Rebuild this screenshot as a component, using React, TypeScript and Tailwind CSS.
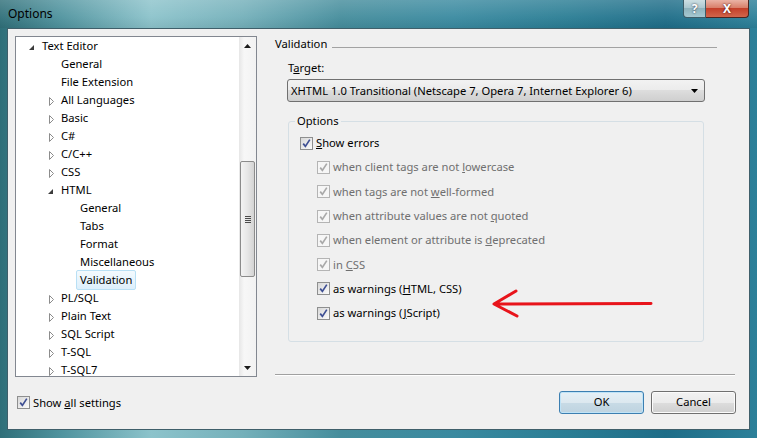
import React from 'react'
import clsx from 'clsx'

type Node = { label: string; level: number; toggle?: 'open' | 'closed'; selected?: boolean }

const tree: Node[] = [
  { label: 'Text Editor', level: 0, toggle: 'open' },
  { label: 'General', level: 1 },
  { label: 'File Extension', level: 1 },
  { label: 'All Languages', level: 1, toggle: 'closed' },
  { label: 'Basic', level: 1, toggle: 'closed' },
  { label: 'C#', level: 1, toggle: 'closed' },
  { label: 'C/C++', level: 1, toggle: 'closed' },
  { label: 'CSS', level: 1, toggle: 'closed' },
  { label: 'HTML', level: 1, toggle: 'open' },
  { label: 'General', level: 2 },
  { label: 'Tabs', level: 2 },
  { label: 'Format', level: 2 },
  { label: 'Miscellaneous', level: 2 },
  { label: 'Validation', level: 2, selected: true },
  { label: 'PL/SQL', level: 1, toggle: 'closed' },
  { label: 'Plain Text', level: 1, toggle: 'closed' },
  { label: 'SQL Script', level: 1, toggle: 'closed' },
  { label: 'T-SQL', level: 1, toggle: 'closed' },
  { label: 'T-SQL7', level: 1, toggle: 'closed' },
]

const indent = ['pl-[7px]', 'pl-[26px]', 'pl-[45px]']

function Toggle({ kind }: { kind?: 'open' | 'closed' }) {
  return (
    <svg width="19" height="18" viewBox="0 0 19 18" className="shrink-0">
      {kind === 'open' && <polygon points="11,8 11,13 6,13" fill="#3c3c3c" />}
      {kind === 'closed' && <polygon points="7.5,6.5 7.5,14.5 11.5,10.5" fill="#fff" stroke="#8c8c8c" />}
    </svg>
  )
}

function Check({ disabled }: { disabled?: boolean }) {
  return (
    <span
      className={clsx(
        'flex h-[13px] w-[13px] shrink-0 items-center justify-center border',
        disabled
          ? 'border-[#b4b4b4] bg-[#f6f6f6]'
          : 'border-[#8e8f8f] bg-[linear-gradient(135deg,#d8d8d8,#fbfbfb)]'
      )}
    >
      <svg width="11" height="11" viewBox="0 0 11 11">
        <path
          d="M2.2 5.6 L4.4 8.4 L8.8 1.6"
          fill="none"
          stroke={disabled ? '#a9a9a9' : '#3e4f93'}
          strokeWidth="1.7"
        />
      </svg>
    </span>
  )
}

function Option({ children, disabled, sub }: { children: React.ReactNode; disabled?: boolean; sub?: boolean }) {
  return (
    <div className={clsx('flex h-[24.3px] items-center gap-[3px]', sub ? 'pl-[28px]' : 'pl-[11px]')}>
      <Check disabled={disabled} />
      <span className={clsx('leading-[16px]', disabled && 'text-[#6f6f6f]')}>{children}</span>
    </div>
  )
}

function Scrollbar() {
  return (
    <div className="flex w-[17px] shrink-0 flex-col bg-[linear-gradient(90deg,#e6e6e6,#f7f7f7_30%,#f2f2f2)]">
      <div className="flex h-[17px] items-center justify-center">
        <svg width="7" height="4" viewBox="0 0 7 4">
          <polygon points="0,4 7,4 3.5,0" fill="#1a1a1a" />
        </svg>
      </div>
      <div className="flex flex-1 flex-col items-center pt-[107px]">
        <div className="flex h-[116px] w-[15px] items-center justify-center rounded-[2px] border border-[#8b8b8b] bg-[linear-gradient(90deg,#f3f3f3,#e6e6e6_50%,#d3d3d3)]">
          <div className="flex flex-col gap-[1px]">
            <div className="h-px w-[6px] bg-[#4a4a4a]" />
            <div className="h-px w-[6px] bg-[#4a4a4a]" />
            <div className="h-px w-[6px] bg-[#4a4a4a]" />
            <div className="h-px w-[6px] bg-[#4a4a4a]" />
          </div>
        </div>
      </div>
      <div className="flex h-[17px] items-center justify-center">
        <svg width="7" height="4" viewBox="0 0 7 4">
          <polygon points="0,0 7,0 3.5,4" fill="#1a1a1a" />
        </svg>
      </div>
    </div>
  )
}

function Tree() {
  return (
    <div className="flex h-[341px] w-[242px] shrink-0 overflow-hidden border border-[#828790] bg-white">
      <div className="flex-1 overflow-hidden">
        {tree.map((n, i) => (
          <div key={i} className={clsx('flex h-[18px] items-center', indent[n.level])}>
            <Toggle kind={n.toggle} />
            <span
              className={clsx(
                'leading-[16px]',
                n.selected &&
                  '-ml-[4px] rounded-[2px] border border-[#b9e0f5] bg-[linear-gradient(#f4fafe,#ddeffb)] px-[3px] py-px'
              )}
            >
              {n.label}
            </span>
          </div>
        ))}
      </div>
      <Scrollbar />
    </div>
  )
}

export default function App() {
  return (
    <div className="relative flex h-[438px] w-[757px] flex-col overflow-hidden bg-[linear-gradient(90deg,#2f6f79_0%,#4f939e_8%,#8cc3cb_20%,#74b0ba_32%,#458d9c_45%,#3a8aa0_60%,#2a7d94_75%,#1e6d88_88%,#2c8099_100%)] font-['Noto_Sans','Open_Sans',sans-serif] text-[11.2px] text-black">
      {/* title bar */}
      <div className="relative flex h-[28px] shrink-0 items-center pl-[8px] bg-[linear-gradient(rgba(255,255,255,0.18),rgba(255,255,255,0.05)_60%,rgba(0,0,0,0.05))]">
        <span className="text-[12px] leading-[16px]">Options</span>
        <div className="absolute right-[8px] top-0 flex">
          <div className="flex h-[18px] w-[23px] items-center justify-center rounded-bl-[4px] border border-t-0 border-[#3e5d68] bg-[linear-gradient(#cddfe3,#a9c6ce_50%,#8fb3bd_50%,#a6c9d2)] text-[12px] font-bold text-white [text-shadow:0_0_2px_#223]">
            ?
          </div>
          <div className="flex h-[18px] w-[43px] items-center justify-center rounded-br-[4px] border border-l-0 border-t-0 border-[#4b2520] bg-[linear-gradient(#eab3a5,#d9806b_45%,#c4402a_50%,#d2664b)] text-[12px] font-bold text-white [text-shadow:0_0_2px_#300]">
            X
          </div>
        </div>
      </div>

      {/* client */}
      <div className="flex flex-1 px-[7px] pb-[8px]">
        <div className="flex flex-1 flex-col border border-[#3f5f6a] bg-[#f0f0f0]">
          <div className="flex h-[341px] gap-[18px] pl-[7px] pr-[14px] pt-[7px] box-content">
            <Tree />
            <div className="flex flex-1 flex-col">
              <div className="flex h-[16px] items-center gap-[5px]">
                <span className="leading-[16px]">Validation</span>
                <div className="mr-[18px] mt-[6px] h-px flex-1 bg-[#a2a2a2]" />
              </div>
              <div className="ml-[13px] mt-[8px] h-[16px] leading-[16px]">
                T<u>a</u>rget:
              </div>
              <div className="ml-[12px] mt-[3px] flex h-[23px] w-[418px] items-center justify-between rounded-[3px] border border-[#707070] bg-[linear-gradient(#f2f2f2_0%,#ebebeb_50%,#dddddd_50%,#cfcfcf_100%)] pl-[3px] pr-[6px]">
                <span className="leading-[16px]">XHTML 1.0 Transitional (Netscape 7, Opera 7, Internet Explorer 6)</span>
                <svg width="7" height="4" viewBox="0 0 7 4">
                  <polygon points="0,0 7,0 3.5,4" fill="#000" />
                </svg>
              </div>
              <fieldset className="ml-[13px] mt-[11px] w-[416px] rounded-[3px] border border-[#d5dfe5] pb-[16px] pt-[2px]">
                <legend className="ml-[6px] px-[2px] leading-[16px]">Options</legend>
                <Option>
                  <u>S</u>how errors
                </Option>
                <Option sub disabled>
                  when client tags are not <u>l</u>owercase
                </Option>
                <Option sub disabled>
                  when tags are not <u>w</u>ell-formed
                </Option>
                <Option sub disabled>
                  when attribute values are not <u>q</u>uoted
                </Option>
                <Option sub disabled>
                  when element or attribute is <u>d</u>eprecated
                </Option>
                <Option sub disabled>
                  in <u>C</u>SS
                </Option>
                <Option sub>
                  as warnings (<u>H</u>TML, CSS)
                </Option>
                <Option sub>
                  as warnings (<u>J</u>Script)
                </Option>
              </fieldset>
              <div className="mt-auto h-px bg-[#a0a0a0]" />
              <div className="mb-[1px] h-px bg-white" />
            </div>
          </div>

          <div className="mt-[14px] flex h-[23px] items-center justify-between pl-[9px] pr-[13px]">
            <div className="flex items-center gap-[3px]">
              <Check />
              <span className="leading-[16px]">
                Show <u>a</u>ll settings
              </span>
            </div>
            <div className="flex gap-[7px]">
              <button className="flex h-[23px] w-[85px] items-center justify-center rounded-[3px] border border-[#3c7fb1] bg-[linear-gradient(#e5f0f6_0%,#dce8ef_50%,#c8dbe6_50%,#bed3e0_100%)] shadow-[inset_0_0_0_1px_#bfe3f7]">
                OK
              </button>
              <button className="flex h-[23px] w-[85px] items-center justify-center rounded-[3px] border border-[#707070] bg-[linear-gradient(#f2f2f2_0%,#ebebeb_50%,#dddddd_50%,#cfcfcf_100%)] shadow-[inset_0_0_0_1px_#fbfbfb]">
                Cancel
              </button>
            </div>
          </div>
        </div>
      </div>

      {/* annotation arrow */}
      <svg className="absolute left-[490px] top-[286px]" width="165" height="35" viewBox="0 0 165 35">
        <path d="M161 17.5 L4 18 M26 5 L4 18 L27 30" fill="none" stroke="#e8141b" strokeWidth="3" strokeLinecap="round" strokeLinejoin="round" />
      </svg>
    </div>
  )
}
